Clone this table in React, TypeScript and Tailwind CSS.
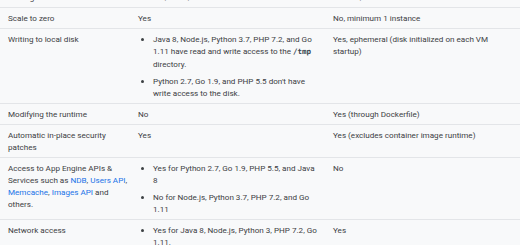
import React from 'react'

type Cell = React.ReactNode

const A = ({ children }: { children: React.ReactNode }) => (
  <a className="text-[#1a73e8] no-underline">{children}</a>
)

const List = ({ items }: { items: React.ReactNode[] }) => (
  <ul className="list-disc pl-[15px] m-0">
    {items.map((it, i) => (
      <li key={i} className={i > 0 ? 'mt-[5px]' : ''}>
        {it}
      </li>
    ))}
  </ul>
)

const rows: [Cell, Cell, Cell][] = [
  ['Scaling', 'Manual, basic, automatic', 'Manual, automatic'],
  ['Scale to zero', 'Yes', 'No, minimum 1 instance'],
  [
    'Writing to local disk',
    <List
      items={[
        <>
          Java 8, Node.js, Python 3.7, PHP 7.2, and Go 1.11 have read and write access to the{' '}
          <code className="font-['DejaVu_Sans_Mono',monospace] text-[7.5px] font-bold text-[#37474f]">/tmp</code>{' '}
          directory.
        </>,
        "Python 2.7, Go 1.9, and PHP 5.5 don't have write access to the disk.",
      ]}
    />,
    'Yes, ephemeral (disk initialized on each VM startup)',
  ],
  ['Modifying the runtime', 'No', 'Yes (through Dockerfile)'],
  ['Automatic in-place security patches', 'Yes', 'Yes (excludes container image runtime)'],
  [
    <>
      Access to App Engine APIs &amp; Services such as <A>NDB</A>, <A>Users API</A>, <A>Memcache</A>,{' '}
      <A>Images API</A> and others.
    </>,
    <List
      items={[
        'Yes for Python 2.7, Go 1.9, PHP 5.5, and Java 8',
        'No for Node.js, Python 3.7, PHP 7.2, and Go 1.11',
      ]}
    />,
    'No',
  ],
  [
    'Network access',
    <List items={['Yes for Java 8, Node.js, Python 3, PHP 7.2, Go 1.11.', 'No for Python 2.7, Go 1.9, PHP 5.5']} />,
    'Yes',
  ],
]

export default function App() {
  return (
    <div className="w-[520px] h-[245px] overflow-hidden bg-white font-['Roboto',sans-serif] text-[8.1px] leading-[12px] text-[#3c4043]">
      <table className="-mt-[13px] w-[520px] border-collapse table-fixed bg-[#f8f9fa]">
        <colgroup>
          <col className="w-[130px]" />
          <col className="w-[195px]" />
          <col className="w-[195px]" />
        </colgroup>
        <tbody>
          {rows.map((r, i) => (
            <tr key={i} className="border-b border-[#e3e5e8]">
              {r.map((c, j) => (
                <td key={j} className={j === 0 ? 'align-top pl-[8px] pr-0 py-[4px]' : 'align-top px-[8px] py-[4px]'}>
                  {c}
                </td>
              ))}
            </tr>
          ))}
        </tbody>
      </table>
    </div>
  )
}
